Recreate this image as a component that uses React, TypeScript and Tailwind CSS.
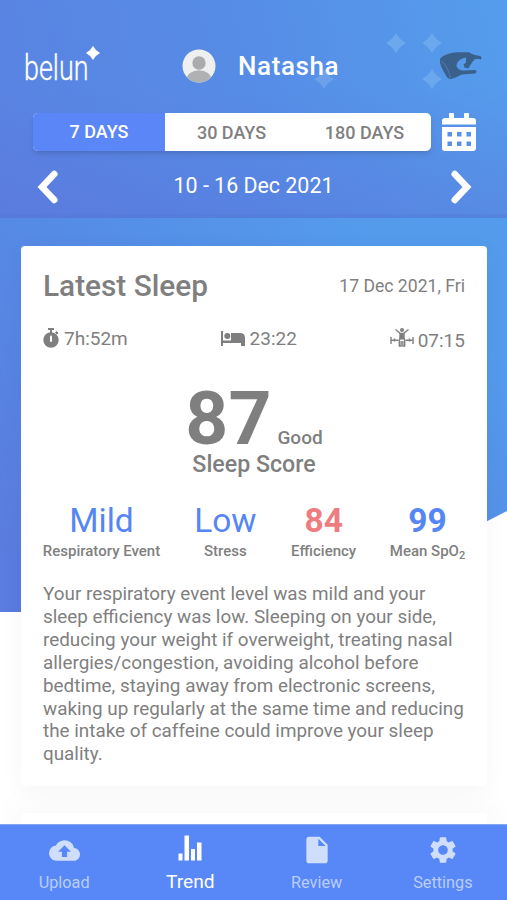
import React from "react";
import { MdCloudUpload, MdInsertDriveFile, MdSettings } from "react-icons/md";

const font = "font-['Roboto','Liberation_Sans',sans-serif]";

const metrics = [
  { value: "Mild", label: "Respiratory Event", style: "text-[#5686f4] font-normal", width: "w-[117px]" },
  { value: "Low", label: "Stress", style: "text-[#5686f4] font-normal", width: "w-[64px]" },
  { value: "84", label: "Efficiency", style: "text-[#ed7d80] font-bold", width: "w-[66px]" },
  { value: "99", label: "Mean SpO", sub: "2", style: "text-[#5686f4] font-bold", width: "w-[75px]" },
];

const summary = [
  "Your respiratory event level was mild and your",
  "sleep efficiency was low. Sleeping on your side,",
  "reducing your weight if overweight, treating nasal",
  "allergies/congestion, avoiding alcohol before",
  "bedtime, staying away from electronic screens,",
  "waking up regularly at the same time and reducing",
  "the intake of caffeine could improve your sleep",
  "quality.",
];

function Spark({ className }: { className: string }) {
  return (
    <svg viewBox="0 0 20 20" className={className} fill="currentColor">
      <path d="M10 0 Q13.500 6.500 20 10 Q13.500 13.500 10 20 Q6.500 13.500 0 10 Q6.500 6.500 10 0Z" />
    </svg>
  );
}

function Logo() {
  return (
    <div className="relative w-[76px] h-[40px] text-white">
      <span className="absolute left-0 top-[2px] block origin-left scale-x-[0.78] text-[34.500px] leading-[40px] font-light [-webkit-text-stroke:0.3px_white]">
        belun
      </span>
      <Spark className="absolute left-[62px] top-0 w-[14px] h-[14px]" />
    </div>
  );
}

function Avatar() {
  return (
    <svg viewBox="0 0 34 34" className="w-[34px] h-[34px]">
      <defs>
        <clipPath id="avatar">
          <circle cx="17" cy="17" r="16.5" />
        </clipPath>
      </defs>
      <g clipPath="url(#avatar)">
        <rect width="34" height="34" fill="#efefef" />
        <circle cx="17" cy="14" r="6.7" fill="#a9abac" />
        <ellipse cx="17" cy="31" rx="12.5" ry="9.8" fill="#b0b1b2" />
      </g>
    </svg>
  );
}

function Ring() {
  return (
    <svg viewBox="0 0 44 30" className="w-[44px] h-[30px]">
      <path
        d="M1 8 C4 4 11 1.300 19 1.200 L30 1.300 C33 3.500 37 4.500 41 5 C42.500 5.500 43 7 42 8.500 C39 7.500 37 7.500 35.500 8.500 C33 11 31 14 29.500 17.500 L25.500 16.500 L24.500 13.500 L27 11.500 L27 6.500 C21 7.500 17.500 11 17.500 15 C18 17.500 21 19.500 25 19.500 L36 19 C38 19.500 38 22 36 22.500 L23 23.500 C19 25 15 27.500 12 28 C9.500 28 8 26.500 7 24.500 C4.500 20 0 13 1 8Z"
        fill="#3a608c"
      />
      <path d="M2.500 10 C7 14 10 20 11.500 27" stroke="#4c76a4" strokeWidth="1.200" fill="none" />
    </svg>
  );
}

function CalendarIcon() {
  return (
    <svg viewBox="0 0 34 38" className="w-[34px] h-[38px]">
      <path
        fill="white"
        fillRule="evenodd"
        d="M7 1q0-1 1-1h3q1 0 1 1v4h10V1q0-1 1-1h3q1 0 1 1v4h4q3 0 3 3v3.500H0V8q0-3 3-3h4ZM0 14h34v21q0 3-3 3H3q-3 0-3-3ZM5.500 19v4.500h4.500V19ZM15 19v4.500h4.500V19ZM24.500 19v4.500h4.500V19ZM5.500 28.500V33h4.500v-4.500ZM15 28.500V33h4.500v-4.500ZM24.500 28.500V33h4.500v-4.500Z"
      />
    </svg>
  );
}

function Chevron({ flip }: { flip?: boolean }) {
  return (
    <svg viewBox="0 0 22 34" className={flip ? "w-[22px] h-[34px] rotate-180" : "w-[22px] h-[34px]"}>
      <path d="M17.300 4 L5 17 L17.300 30" fill="none" stroke="white" strokeWidth="6.500" strokeLinecap="round" />
    </svg>
  );
}

function StopwatchIcon() {
  return (
    <svg viewBox="0 0 16 20" className="w-4 h-5" fill="#7f7f7f">
      <path d="M5 0h6v2H9v3H7V2H5Z" />
      <path d="m12.500 4.500 1.500 1.500 1-1-1.500-1.500Z" stroke="#7f7f7f" />
      <circle cx="8" cy="12" r="7.700" />
      <rect x="7" y="7.500" width="2" height="6.500" rx="1" fill="white" />
    </svg>
  );
}

function BedIcon() {
  return (
    <svg viewBox="0 0 24 15" className="w-6 h-[15px]" fill="#7f7f7f">
      <path d="M0 0h2v10h20v5h-2v-3H2v3H0Z" />
      <circle cx="6.300" cy="5" r="3" />
      <path d="M10 2h9q5 0 5 5v8h-2v-4H2V9.500h8Z" />
    </svg>
  );
}

function WakeIcon() {
  return (
    <svg viewBox="0 0 24 19" className="w-6 h-[19px] -mt-[2px]" fill="none" stroke="#808080" strokeWidth="1.400">
      <circle cx="12" cy="2" r="2" fill="#808080" stroke="none" />
      <path d="M5.500 1.500 10.500 5.500h3l5-4" />
      <path d="M9.300 5h5.400v6.500H9.300Z" fill="#808080" stroke="none" />
      <path d="M10.300 10 9.300 12.500V18h1.800v-5M13.700 10l1 2.500V18h-1.800v-5" />
      <path d="M1 9v7M23 9v7M1 12.300h7.500M15.500 12.300H23M4.500 10.500v3M19.500 10.500v3" />
    </svg>
  );
}

function TrendIcon() {
  return (
    <svg viewBox="0 0 24 26" className="w-6 h-[26px]" fill="white">
      <path d="M0.500 18.500H4.500v7H0.500ZM6.500 0.500H11v25H6.500ZM13 14h4v11.500h-4ZM19 7.500h4.500v18H19Z" />
    </svg>
  );
}

const tabs = [
  { label: "Upload", icon: <MdCloudUpload className="w-[31px] h-[31px]" /> },
  { label: "Trend", icon: <TrendIcon />, active: true },
  { label: "Review", icon: <MdInsertDriveFile className="w-[32px] h-[32px]" /> },
  { label: "Settings", icon: <MdSettings className="w-[32px] h-[32px]" /> },
];

export default function App() {
  return (
    <div className={`relative flex flex-col w-[507px] h-[900px] overflow-hidden bg-white text-[#7f7f7f] ${font}`}>
      {/* Slanted backdrop behind the cards */}
      <svg viewBox="0 0 507 900" className="absolute inset-0 w-[507px] h-[900px]">
        <defs>
          <linearGradient id="backdrop" gradientUnits="userSpaceOnUse" x1="0" y1="560" x2="330" y2="200">
            <stop offset="0" stopColor="#5a7bdf" />
            <stop offset="0.6" stopColor="#558ce6" />
            <stop offset="1" stopColor="#549bec" />
          </linearGradient>
        </defs>
        <path d="M0 0H507V511Q470 530 430 550L300 612H0Z" fill="url(#backdrop)" />
      </svg>

      {/* Header */}
      <header className="relative flex flex-col h-[218px] shrink-0 bg-linear-[75deg] from-[#5a82e2] via-[#568ce6] to-[#559dec]">
        <div className="absolute inset-x-0 bottom-0 h-[130px] bg-linear-to-b from-[#5b6fd8]/0 to-[#5b6fd8]/35" />
        <Spark className="absolute left-[386px] top-[33px] w-5 h-5 text-[#6ca8ee]" />
        <Spark className="absolute left-[422px] top-[33px] w-5 h-5 text-[#6ca8ee]" />
        <Spark className="absolute left-[314px] top-[69px] w-5 h-5 text-[#6ca1ea]" />
        <Spark className="absolute left-[422px] top-[69px] w-5 h-5 text-[#6ca8ee]" />

        <div className="relative flex items-center h-[113px] pt-[18px] pl-[24px]">
          <Logo />
          <div className="ml-[82px]">
            <Avatar />
          </div>
          <h1 className="ml-[22px] w-[201px] text-[26px] leading-8 font-medium tracking-[0.6px] text-white">Natasha</h1>
          <Ring />
        </div>

        <div className="relative flex items-start h-[43px] pl-[33px]">
          <div className="flex h-[38px] w-[398px] rounded-[5px] overflow-hidden bg-white shadow-md text-[18px] leading-[38px] font-medium text-center">
            <button className="w-[132px] bg-[#5b86f8] text-white">7 DAYS</button>
            <button className="w-[133px] pt-px">30 DAYS</button>
            <button className="w-[133px] pt-px">180 DAYS</button>
          </div>
          <div className="ml-[11px]">
            <CalendarIcon />
          </div>
        </div>

        <div className="relative flex items-center justify-between h-[62px] pl-[37px] pr-[35px] pt-[4px] text-white border-b-4 border-[#4f78cf]/30">
          <Chevron />
          <span className="text-[21.400px] leading-7 -mt-[3px] -ml-[2px]">10 - 16 Dec 2021</span>
          <Chevron flip />
        </div>
      </header>

      {/* Cards */}
      <main className="relative flex flex-col gap-[27px] pt-[28px] pl-[21px] pr-[20px] h-[606px] overflow-hidden">
        <section className="relative z-10 h-[540px] shrink-0 rounded-[4px] bg-white px-[22px] shadow-[0_4px_24px_rgba(0,0,0,0.04)]">
          <div className="flex items-center justify-between pt-[22px]">
            <h2 className="text-[29.800px] leading-9 font-medium">Latest Sleep</h2>
            <span className="text-[17.600px]">17 Dec 2021, Fri</span>
          </div>

          <div className="flex items-center justify-between mt-[22px] h-6 text-[19px]">
            <div className="flex items-center gap-[5px]">
              <StopwatchIcon />
              <span className="pt-[3px]">7h:52m</span>
            </div>
            <div className="flex items-center gap-[5px]">
              <BedIcon />
              <span className="pt-[3px]">23:22</span>
            </div>
            <div className="flex items-center gap-[4px]">
              <WakeIcon />
              <span className="pt-[6px]">07:15</span>
            </div>
          </div>

          <div className="flex items-baseline justify-center mt-[38px] h-[66px] gap-[6px]">
            <span className="text-[75px] leading-[60px] font-bold">87</span>
            <span className="text-[19px] leading-6 font-medium">Good</span>
          </div>
          <div className="text-center text-[23.200px] leading-7 font-medium -mt-[4px]">Sleep Score</div>

          <div className="flex justify-between mt-[23px]">
            {metrics.map((m) => (
              <div key={m.label} className={`flex flex-col items-center ${m.width}`}>
                <span className={`text-[33.500px] leading-[40px] ${m.style}`}>{m.value}</span>
                <span className="text-[15px] leading-5 h-5 font-medium whitespace-nowrap">
                  {m.label}
                  {m.sub && <sub className="text-[11px]">{m.sub}</sub>}
                </span>
              </div>
            ))}
          </div>

          <p className="mt-[22px] text-[18.870px] leading-[22.900px] whitespace-nowrap">
            {summary.map((line) => (
              <span key={line} className="block">
                {line}
              </span>
            ))}
          </p>
        </section>

        {/* Next card, mostly hidden by the tab bar */}
        <section className="h-[200px] shrink-0 rounded-[4px] bg-white shadow-[0_0_36px_8px_rgba(0,0,0,0.03)] relative z-10 [clip-path:inset(-27px_-20px_0_-20px)]" />
      </main>

      {/* Bottom tabs */}
      <nav className="relative grid grid-cols-4 h-[76px] px-px bg-[#5888f7] border-t border-[#86a7ef]">
        {tabs.map((tab) => (
          <div
            key={tab.label}
            className={tab.active ? "flex flex-col items-center text-white" : "flex flex-col items-center text-[#cfdefd]"}
          >
            <div className={tab.active ? "flex h-[44px] pt-[10px]" : "flex h-[44px] items-center pt-[6px]"}>{tab.icon}</div>
            <span className={tab.active ? "text-[19.200px] leading-[25px]" : "text-[16.300px] leading-[27px] text-[#b9cefc]"}>
              {tab.label}
            </span>
          </div>
        ))}
      </nav>
    </div>
  );
}
